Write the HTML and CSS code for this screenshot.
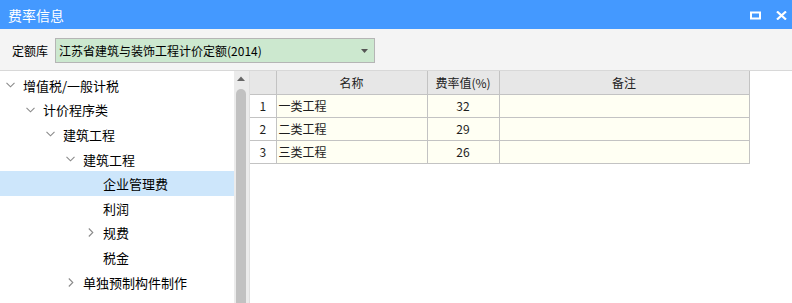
FILE: index.html
```html
<!DOCTYPE html>
<html lang="zh">
<head>
<meta charset="utf-8">
<title>费率信息</title>
<link rel="stylesheet" href="styles.css">
</head>
<body>
<div class="window">
  <div class="titlebar">
    <span class="title">费率信息</span>
    <div class="win-btns">
      <svg class="win-icon" width="11" height="9" viewBox="0 0 11 9"><rect x="1" y="1.5" width="9" height="6" fill="none" stroke="#fff" stroke-width="2"/></svg>
      <svg class="win-icon close" width="11" height="9" viewBox="0 0 11 9"><path d="M1 0.5 L10 8.5 M10 0.5 L1 8.5" stroke="#fff" stroke-width="2.2" fill="none"/></svg>
    </div>
  </div>
  <div class="toolbar">
    <span class="label">定额库</span>
    <div class="select">
      <span class="select-text">江苏省建筑与装饰工程计价定额(2014)</span>
      <svg class="caret" width="7" height="4" viewBox="0 0 7 4"><path d="M0 0 H7 L3.5 4 Z" fill="#555"/></svg>
    </div>
  </div>
  <div class="main">
    <div class="tree">
      <div class="node lv0"><span class="chev"><svg width="9" height="6" viewBox="0 0 9 6"><path d="M0.5 0.8 L4.5 4.8 L8.5 0.8" fill="none" stroke="#8a8a8a" stroke-width="1.1"/></svg></span>增值税/一般计税</div>
      <div class="node lv1"><span class="chev"><svg width="9" height="6" viewBox="0 0 9 6"><path d="M0.5 0.8 L4.5 4.8 L8.5 0.8" fill="none" stroke="#8a8a8a" stroke-width="1.1"/></svg></span>计价程序类</div>
      <div class="node lv2"><span class="chev"><svg width="9" height="6" viewBox="0 0 9 6"><path d="M0.5 0.8 L4.5 4.8 L8.5 0.8" fill="none" stroke="#8a8a8a" stroke-width="1.1"/></svg></span>建筑工程</div>
      <div class="node lv3"><span class="chev"><svg width="9" height="6" viewBox="0 0 9 6"><path d="M0.5 0.8 L4.5 4.8 L8.5 0.8" fill="none" stroke="#8a8a8a" stroke-width="1.1"/></svg></span>建筑工程</div>
      <div class="node lv4 selected"><span class="chev"></span>企业管理费</div>
      <div class="node lv4"><span class="chev"></span>利润</div>
      <div class="node lv4"><span class="chev right"><svg width="6" height="9" viewBox="0 0 6 9"><path d="M0.8 0.5 L4.8 4.5 L0.8 8.5" fill="none" stroke="#8a8a8a" stroke-width="1.1"/></svg></span>规费</div>
      <div class="node lv4"><span class="chev"></span>税金</div>
      <div class="node lv3"><span class="chev right"><svg width="6" height="9" viewBox="0 0 6 9"><path d="M0.8 0.5 L4.8 4.5 L0.8 8.5" fill="none" stroke="#8a8a8a" stroke-width="1.1"/></svg></span>单独预制构件制作</div>
    </div>
    <div class="scrollbar">
      <svg class="up" width="8" height="5" viewBox="0 0 8 5"><path d="M0 5 L4 0.5 L8 5 Z" fill="#666"/></svg>
      <div class="thumb"></div>
    </div>
    <div class="grid">
      <table class="table">
        <colgroup>
          <col class="c-no"><col class="c-name"><col class="c-rate"><col class="c-note">
        </colgroup>
        <thead>
          <tr><th></th><th>名称</th><th>费率值(%)</th><th>备注</th></tr>
        </thead>
        <tbody>
          <tr><td class="no">1</td><td class="name">一类工程</td><td class="rate">32</td><td></td></tr>
          <tr><td class="no">2</td><td class="name">二类工程</td><td class="rate">29</td><td></td></tr>
          <tr><td class="no">3</td><td class="name">三类工程</td><td class="rate">26</td><td></td></tr>
        </tbody>
      </table>
    </div>
  </div>
</div>
</body>
</html>
```

FILE: styles.css
```css
* { box-sizing: border-box; }
html, body { margin: 0; padding: 0; }
body {
  width: 792px;
  height: 303px;
  overflow: hidden;
  background: #fff;
  font-family: "Noto Sans CJK SC", "Noto Sans", sans-serif;
  color: #111;
}
.window { display: flex; flex-direction: column; height: 303px; }

.titlebar {
  height: 29px;
  flex: none;
  background: #4499ff;
  display: flex;
  align-items: center;
  padding-left: 8px;
  padding-right: 5px;
}
.title { color: #fff; font-size: 14px; flex: 1; }
.win-btns { display: flex; align-items: center; gap: 15px; padding-top: 2px; }
.win-icon { display: block; }

.toolbar {
  height: 42px;
  flex: none;
  background: #f4f4f4;
  border-bottom: 1px solid #d8d8d8;
  display: flex;
  align-items: flex-start;
  padding: 9px 0 0 12px;
}
.label { font-size: 12px; line-height: 25px; width: 43px; color: #000; }
.select {
  width: 320px;
  height: 25px;
  background: #cce8cf;
  border: 1px solid #b5b5b5;
  display: flex;
  align-items: center;
  padding-left: 3px;
  padding-right: 6px;
}
.select-text { flex: 1; font-size: 12px; color: #000; }
.caret { display: block; }

.main { flex: 1; display: flex; min-height: 0; }

.tree { width: 234px; flex: none; padding-top: 2px; background: #fff; }
.node {
  height: 24.6px;
  display: flex;
  align-items: center;
  font-size: 13px;
  color: #000;
  white-space: nowrap;
}
.node.selected { background: #cde6fb; }
.chev { width: 17px; flex: none; display: flex; align-items: center; justify-content: flex-start; }
.chev svg { display: block; }
.chev.right { padding-left: 2px; }
.lv0 { padding-left: 6px; }
.lv1 { padding-left: 26px; }
.lv2 { padding-left: 46px; }
.lv3 { padding-left: 66px; }
.lv4 { padding-left: 86px; }

.scrollbar {
  width: 16px;
  flex: none;
  background: #ebebeb;
  border-right: 1px solid #dedede;
  display: flex;
  flex-direction: column;
  align-items: center;
  padding-top: 5px;
  padding-right: 1px;
}
.scrollbar .up { display: block; flex: none; }
.thumb {
  margin-top: 8px;
  width: 10px;
  flex: 1;
  background: #c1c1c1;
  border-radius: 5px 5px 0 0;
}

.grid { flex: 1; background: #fff; }
.table {
  border-collapse: collapse;
  table-layout: fixed;
  width: 499px;
  font-size: 12px;
  color: #1e1e1e;
}
.c-no { width: 26px; }
.c-name { width: 151px; }
.c-rate { width: 72px; }
.c-note { width: 250px; }
.table th, .table td {
  height: 23px;
  padding: 0;
  border: 1px solid #c3c3c3;
  font-weight: normal;
}
.table thead th {
  border-top: none;
  height: 23px;
  background: #e7e7e7;
  text-align: center;
  color: #222;
}
.table thead th:first-child { border-left: none; }
.table td { background: #fffff3; }
.table td.no { background: #fff; text-align: center; border-left: none; }
.table td.name { padding-left: 2px; }
.table td.rate { text-align: center; }
```
